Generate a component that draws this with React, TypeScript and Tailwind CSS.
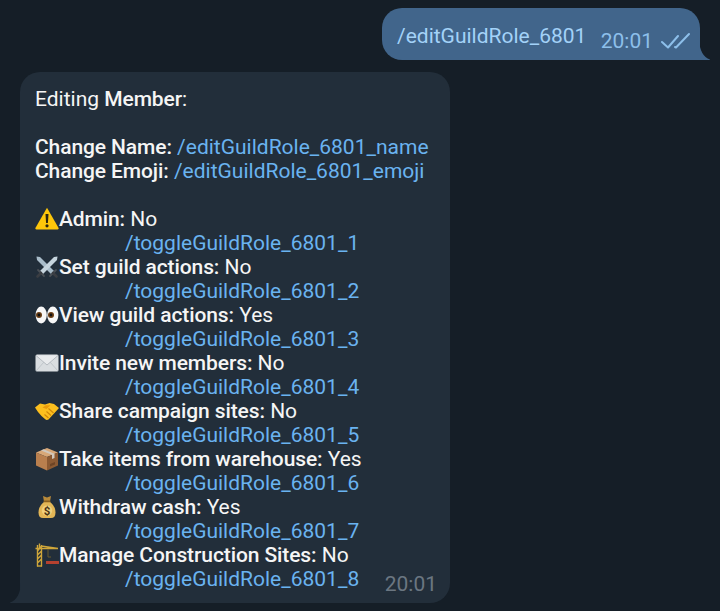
const font = { fontFamily: 'Roboto, "Noto Sans", sans-serif' };

function Warning() {
  return (
    <svg viewBox="0 0 24 24" className="w-6 h-6 shrink-0">
      <path d="M12 .8 L23.6 21 Q24 22.4 22.6 22.4 L1.4 22.4 Q0 22.4 .4 21 Z" fill="#fdc60a" />
      <path d="M10.5 7 h3 l-.6 9 h-1.8 Z" fill="#2a2410" />
      <circle cx="12" cy="18.8" r="1.6" fill="#2a2410" />
    </svg>
  );
}

function Swords() {
  return (
    <svg viewBox="0 0 24 24" className="w-6 h-6 shrink-0">
      <path d="M1.5 1.5 L5 2 L19 16 L16 19 L2 5 Z" fill="#a9bcc9" />
      <path d="M22.5 1.5 L19 2 L5 16 L8 19 L22 5 Z" fill="#c6d4dd" />
      <path d="M3 15 L9 21 M21 15 L15 21" stroke="#4a4f55" strokeWidth="1.8" strokeLinecap="round" />
      <path d="M6 18 L2.5 21.5 M18 18 L21.5 21.5" stroke="#3a3d42" strokeWidth="2.6" strokeLinecap="round" />
    </svg>
  );
}

function Eyes() {
  return (
    <svg viewBox="0 0 24 24" className="w-6 h-6 shrink-0">
      <ellipse cx="6.2" cy="12" rx="5.6" ry="8.4" fill="#f7f7f7" />
      <ellipse cx="17.8" cy="12" rx="5.6" ry="8.4" fill="#f7f7f7" />
      <circle cx="4" cy="12" r="3" fill="#6b3e14" />
      <circle cx="16" cy="12" r="3" fill="#6b3e14" />
      <circle cx="4" cy="12" r="1.4" fill="#111" />
      <circle cx="16" cy="12" r="1.4" fill="#111" />
    </svg>
  );
}

function Envelope() {
  return (
    <svg viewBox="0 0 24 24" className="w-6 h-6 shrink-0">
      <rect x="0.5" y="3.5" width="23" height="17" rx="1.5" fill="#d9dde0" />
      <path d="M1 4.5 L12 14 L23 4.5" fill="#e9ebed" stroke="#a9b0b6" strokeWidth="0.8" />
      <path d="M1 20 L9 11 M23 20 L15 11" stroke="#b9bfc4" strokeWidth="0.8" />
    </svg>
  );
}

function Handshake() {
  return (
    <svg viewBox="0 0 24 24" className="w-6 h-6 shrink-0">
      <path d="M0 8.5 L5 4.5 L10 5.5 L14.5 4 L19 5 L24 9 L19.5 14 L13.5 20.5 Q11.5 21.5 10 20 L6.5 17 L3 13 Z" fill="#fcbf1e" />
      <path d="M7.5 8.5 L11 6.2 L15.5 6.3 L11.5 10 Z" fill="#e89a0c" />
      <path d="M18.5 14 L13.5 9.5 M16 16.5 L11.5 12.5 M13.5 19 L9.5 15.5" stroke="#cf860a" strokeWidth="1.1" fill="none" />
    </svg>
  );
}

function Box() {
  return (
    <svg viewBox="0 0 24 24" className="w-6 h-6 shrink-0">
      <path d="M12 1 L23 5.5 L12 10 L1 5.5 Z" fill="#d8a878" />
      <path d="M1 5.5 L12 10 V23.5 L1 18.5 Z" fill="#b97f4e" />
      <path d="M23 5.5 L12 10 V23.5 L23 18.5 Z" fill="#8c5a33" />
      <path d="M6 3.4 L17 7.8 V12 L19.5 11 V6.8 L8.5 2.3 Z" fill="#cfc7bd" />
      <path d="M15 17 l5-2 v2.5 l-5 2 Z" fill="#6d4426" />
    </svg>
  );
}

function MoneyBag() {
  return (
    <svg viewBox="0 0 24 24" className="w-6 h-6 shrink-0">
      <path d="M8 1 L12 2.5 L16 1 L15 6.5 H9 Z" fill="#b98a3a" />
      <path d="M9.5 6.5 H14.5 Q20.5 11 20.5 17.5 Q20.5 23 16 23 H8 Q3.5 23 3.5 17.5 Q3.5 11 9.5 6.5 Z" fill="#e3b656" />
      <rect x="8.5" y="5.5" width="7" height="1.8" rx=".9" fill="#8a5f1f" />
      <circle cx="12" cy="15.5" r="5.2" fill="#f0cf7c" />
      <text x="12" y="19.5" textAnchor="middle" fontSize="11.5" fontWeight="700" fill="#4a3212" fontFamily="Roboto">$</text>
    </svg>
  );
}

function Crane() {
  return (
    <svg viewBox="0 0 24 24" className="w-6 h-6 shrink-0">
      <path d="M2.5 23.5 V2 M6.5 23.5 V2 M2.5 20 L6.5 16 M2.5 16 L6.5 12 M2.5 12 L6.5 8 M.5 5.5 H23 M2.5 8 L6.5 3 L23 5.5 M4.5 .5 V5" stroke="#cfa63a" strokeWidth="1.4" fill="none" />
      <path d="M13 6 V14 M13 14 H16" stroke="#6b5a2a" strokeWidth="1" fill="none" />
      <rect x="11" y="18" width="13" height="3" fill="#b5412f" />
      <path d="M2 23 H7" stroke="#cfa63a" strokeWidth="1.4" />
    </svg>
  );
}

const permissions = [
  { icon: <Warning />, label: 'Admin:', value: 'No', id: 1 },
  { icon: <Swords />, label: 'Set guild actions:', value: 'No', id: 2 },
  { icon: <Eyes />, label: 'View guild actions:', value: 'Yes', id: 3 },
  { icon: <Envelope />, label: 'Invite new members:', value: 'No', id: 4 },
  { icon: <Handshake />, label: 'Share campaign sites:', value: 'No', id: 5 },
  { icon: <Box />, label: 'Take items from warehouse:', value: 'Yes', id: 6 },
  { icon: <MoneyBag />, label: 'Withdraw cash:', value: 'Yes', id: 7 },
  { icon: <Crane />, label: 'Manage Construction Sites:', value: 'No', id: 8 },
];

export default function App() {
  return (
    <div className="relative h-[611px] w-[720px] overflow-hidden bg-[#151e27] text-[21px] leading-6 text-[#f5f5f5]" style={font}>
      <div className="flex flex-col gap-3 pt-2 pl-5 pr-5">
        {/* outgoing */}
        <div className="self-end relative h-[52px] w-[318px] rounded-[20px] rounded-br-none bg-[#41658b] flex pl-[15px] pr-[9px] pt-4">
          <span className="text-[#a3d2f8]">/editGuildRole_6801</span>
          <span className="ml-auto flex items-center gap-2 h-6 mt-[5px] text-[#8dbfea]">
            20:01
            <svg viewBox="0 0 30 18" className="w-[30px] h-[18px]" fill="none" stroke="#8dbfea" strokeWidth="2" strokeLinecap="round" strokeLinejoin="round">
              <path d="M1 10 L7 15.5 L17 4" />
              <path d="M14 15 L15 15.5 L28 2" />
            </svg>
          </span>
          <svg viewBox="0 0 11 20" className="absolute -right-[10px] bottom-0 w-[11px] h-5">
            <path d="M0 0 Q1 16 11 19.5 Q11 20 10 20 L0 20 Z" fill="#41658b" />
          </svg>
        </div>

        {/* incoming */}
        <div className="relative h-[531px] w-[430px] rounded-[20px] rounded-bl-none bg-[#222e3a] pl-[15px] pt-[15px]">
          <p>Editing <span className="font-medium tracking-[-0.1px]">Member</span>:</p>
          <p className="mt-6"><span className="font-medium tracking-[-0.1px]">Change Name:</span> <a className="text-[#6ab3f0]">/editGuildRole_6801_name</a></p>
          <p><span className="font-medium tracking-[-0.1px]">Change Emoji:</span> <a className="text-[#6ab3f0]">/editGuildRole_6801_emoji</a></p>
          <div className="mt-6">
            {permissions.map((p) => (
              <div key={p.id}>
                <div className="flex items-center">
                  {p.icon}
                  <p className="whitespace-pre"><span className="font-medium tracking-[-0.1px]">{p.label}</span> {p.value}</p>
                </div>
                <a className="block pl-[90px] text-[#6ab3f0]">/toggleGuildRole_6801_{p.id}</a>
              </div>
            ))}
          </div>
          <span className="absolute right-[13px] bottom-[7px] text-[#6b7681]">20:01</span>
          <svg viewBox="0 0 11 20" className="absolute -left-[10px] bottom-0 w-[11px] h-5">
            <path d="M11 0 Q10 16 0 19.5 Q0 20 1 20 L11 20 Z" fill="#222e3a" />
          </svg>
        </div>
      </div>
    </div>
  );
}
